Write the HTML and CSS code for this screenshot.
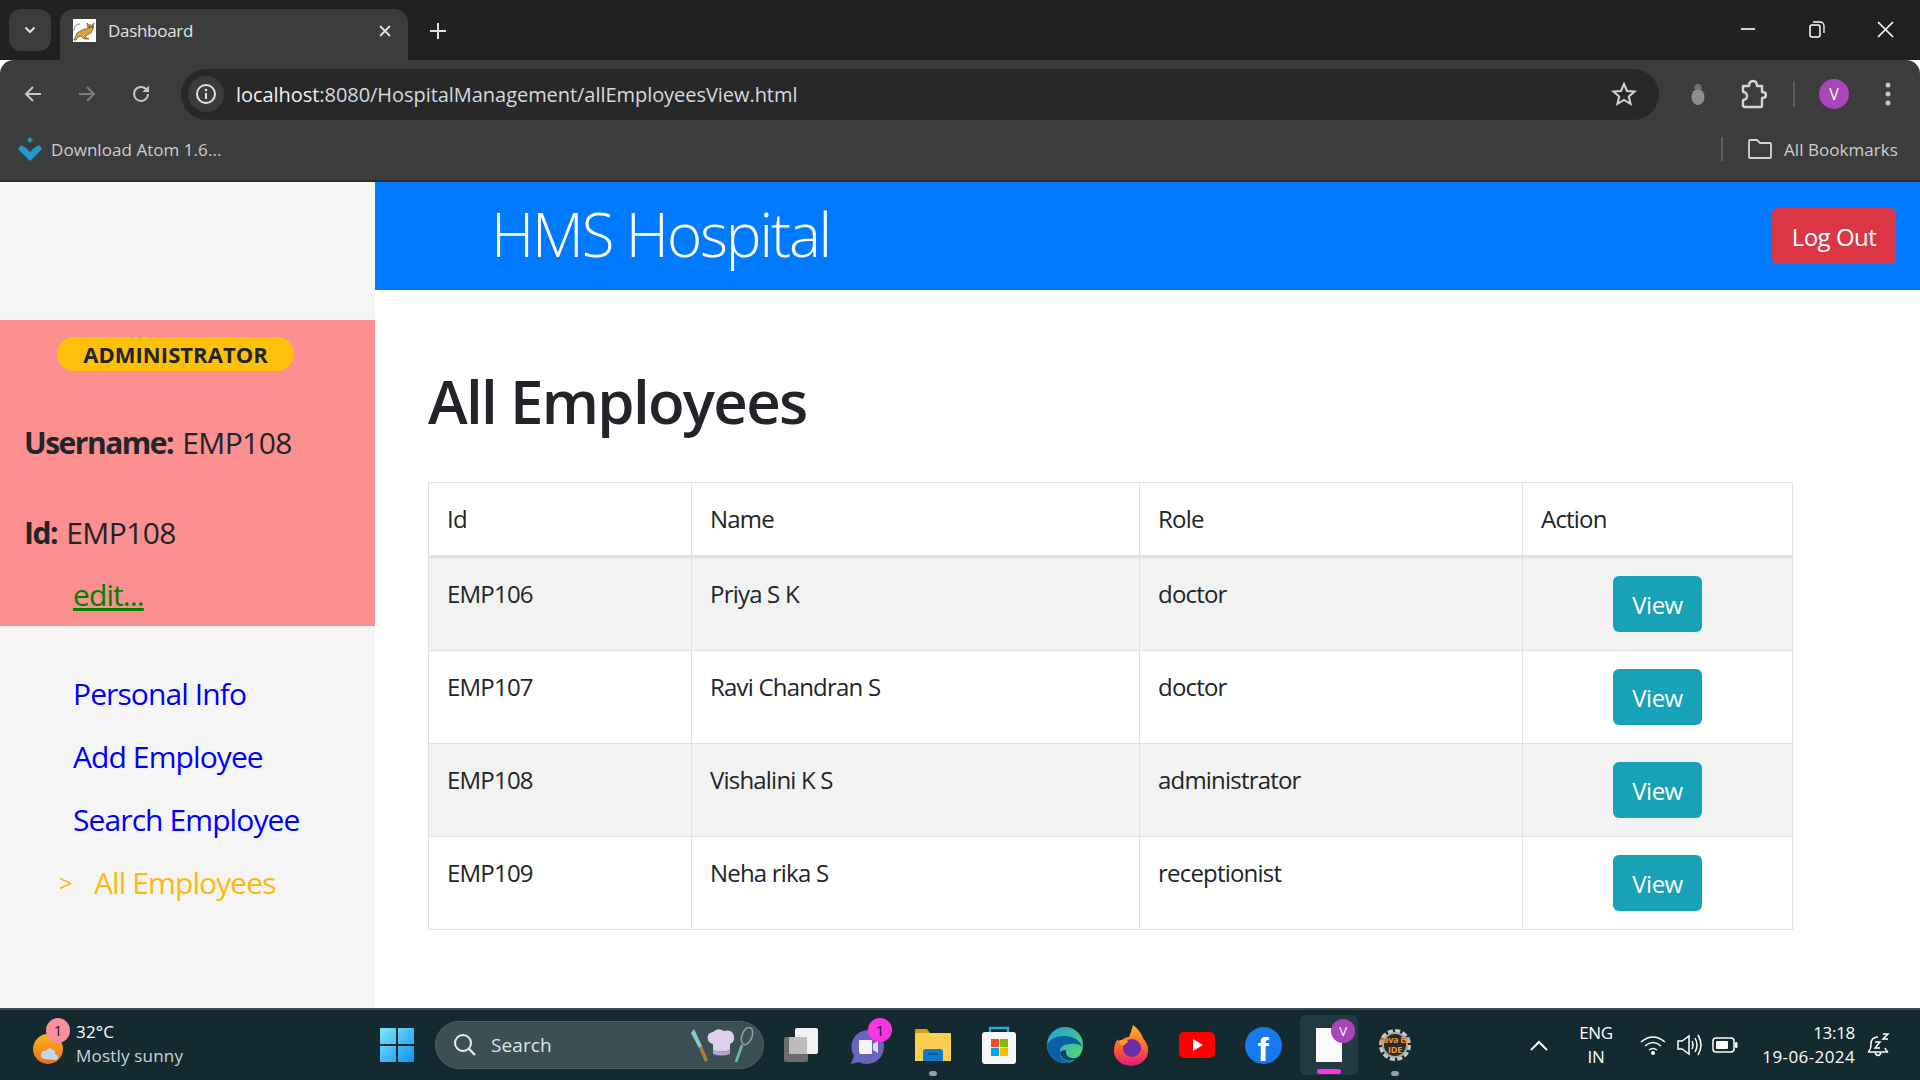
FILE: index.html
```html
<!DOCTYPE html>
<html lang="en">
<head>
  <meta charset="UTF-8" />
  <meta name="viewport" content="width=device-width, initial-scale=1.0" />
  <title>Dashboard</title>
  <link rel="stylesheet" href="styles.css">
</head>
<body>

  <!-- browser chrome -->
  <div class="tabstrip">
    <div class="tab-list">
      <svg width="14" height="14" viewBox="0 0 14 14"><path d="M2.500 4.500 7 9l4.500-4.500" fill="none" stroke="#e3e3e3" stroke-width="2"/></svg>
    </div>
    <div class="tab">
      <svg class="favicon" width="23" height="23" viewBox="0 0 23 23">
        <rect width="23" height="23" fill="#fff"/>
        <path d="M1 21 4 14l7-4 4 0-1-6 2 2h3l2-2-1 6-2 4-4 2-2 2 4 2h-5l-3-3-3 1-2 3z" fill="#d9a441" stroke="#6b4d1c" stroke-width=".7"/>
        <path d="M1 12q0-7 6-7" fill="none" stroke="#888" stroke-width="1"/>
        <circle cx="16.500" cy="8" r=".9" fill="#333"/><circle cx="19.500" cy="8" r=".9" fill="#333"/>
      </svg>
      <span class="tab-title">Dashboard</span>
      <svg class="tab-close" width="12" height="12" viewBox="0 0 12 12"><path d="M1 1l10 10M11 1 1 11" stroke="#e3e3e3" stroke-width="1.800"/></svg>
    </div>
    <svg class="new-tab" width="16" height="16" viewBox="0 0 16 16"><path d="M8 0v16M0 8h16" stroke="#e3e3e3" stroke-width="2"/></svg>
    <div class="window-btns">
      <svg width="16" height="16" viewBox="0 0 16 16"><path d="M1 8h14" stroke="#fff" stroke-width="1.600"/></svg>
      <svg width="16" height="18" viewBox="0 0 16 18"><rect x="1" y="5" width="10" height="12" rx="2" fill="none" stroke="#fff" stroke-width="1.500"/><path d="M4 2h7a4 4 0 0 1 4 4v7" fill="none" stroke="#fff" stroke-width="1.300"/></svg>
      <svg width="17" height="17" viewBox="0 0 17 17"><path d="M1 1l15 15M16 1 1 16" stroke="#fff" stroke-width="1.600"/></svg>
    </div>
  </div>

  <div class="toolbar">
    <svg class="nav-btn" width="22" height="22" viewBox="0 0 22 22"><path d="M19 11H4M11 4l-7 7 7 7" fill="none" stroke="#c7c7c7" stroke-width="2"/></svg>
    <svg class="nav-btn" width="22" height="22" viewBox="0 0 22 22"><path d="M3 11h15M11 4l7 7-7 7" fill="none" stroke="#7c7c7c" stroke-width="2"/></svg>
    <svg class="nav-btn" width="22" height="22" viewBox="0 0 22 22"><path d="M18 11a7 7 0 1 1-2-5l2 2" fill="none" stroke="#c7c7c7" stroke-width="2"/><path d="M19 2.500v6.500h-6.500z" fill="#c7c7c7"/></svg>
    <div class="omnibox">
      <span class="info-chip">
        <svg width="22" height="22" viewBox="0 0 22 22"><circle cx="11" cy="11" r="9" fill="none" stroke="#e3e3e3" stroke-width="2"/><path d="M11 10v6" stroke="#e3e3e3" stroke-width="2"/><circle cx="11" cy="7" r="1.300" fill="#e3e3e3"/></svg>
      </span>
      <span class="url"><span class="url-host">localhost</span>:8080/HospitalManagement/allEmployeesView.html</span>
      <svg class="star" width="26" height="26" viewBox="0 0 26 26"><path d="M13 3l3 7 7.500.6-5.700 5 1.800 7.400L13 19l-6.600 4 1.800-7.400-5.700-5L10 10z" fill="none" stroke="#d5d5d5" stroke-width="2"/></svg>
    </div>
    <div class="toolbar-right">
      <svg width="16" height="26" viewBox="0 0 16 26"><path d="M4 8q0-5 4-5t4 5z" fill="#707070"/><ellipse cx="8" cy="16" rx="6.500" ry="8" fill="#8e8e8e"/></svg>
      <svg class="puzzle" width="26" height="30" viewBox="0 0 26 30"><path d="M2 7h6q0-5 4-5t4 5h5v6q4 0 4 3t-4 3v8q0 1-1 1H3l-1-1v-6q4 0 4-4t-4-4z" fill="none" stroke="#d5d5d5" stroke-width="2.400" stroke-linejoin="round"/></svg>
      <span class="toolbar-sep"></span>
      <span class="avatar">V</span>
      <svg class="dots" width="6" height="26" viewBox="0 0 6 26"><circle cx="3" cy="4" r="2.500" fill="#c7c7c7"/><circle cx="3" cy="13" r="2.500" fill="#c7c7c7"/><circle cx="3" cy="22" r="2.500" fill="#c7c7c7"/></svg>
    </div>
  </div>

  <div class="bookmarks">
    <svg width="24" height="24" viewBox="0 0 24 24"><path d="M12 0l3 3-3 3-3-3z" fill="#1a9ccc"/><path d="M3 8l5 3 4 4 4-4 5-3 3 4-12 12L0 12z" fill="#1a9ccc"/></svg>
    <span class="bm-text">Download Atom 1.6...</span>
    <span class="bm-sep"></span>
    <svg class="bm-folder" width="24" height="20" viewBox="0 0 24 20"><path d="M1 2q0-1 1-1h7l3 3h10q1 0 1 1v13q0 1-1 1H2q-1 0-1-1z" fill="none" stroke="#d5d5d5" stroke-width="1.800"/></svg>
    <span class="bm-all">All Bookmarks</span>
  </div>

  <!-- the page itself -->
  <div class="page">
    <div class="sidebar">
      <div class="user-box">
        <span class="role-badge">ADMINISTRATOR</span>
        <p class="user-line"><b>Username:</b> EMP108</p>
        <p class="user-line"><b>Id:</b> EMP108</p>
        <a class="edit-link" href="#">edit...</a>
      </div>
      <ul class="side-nav">
        <li><a href="#">Personal Info</a></li>
        <li><a href="#">Add Employee</a></li>
        <li><a href="#">Search Employee</a></li>
        <li class="current"><span class="arrow">&gt;</span><a href="#">All Employees</a></li>
      </ul>
    </div>

    <div class="main">
      <div class="top-header">
        <span class="hospital-name">HMS Hospital</span>
        <button class="btn-logout">Log Out</button>
      </div>
      <div class="content">
        <h1>All Employees</h1>
        <table class="emp-table">
          <colgroup>
            <col class="col-id"><col class="col-name"><col class="col-role"><col class="col-action">
          </colgroup>
          <thead>
            <tr><th>Id</th><th>Name</th><th>Role</th><th>Action</th></tr>
          </thead>
          <tbody>
            <tr><td>EMP106</td><td>Priya S K</td><td>doctor</td><td class="action"><button class="btn-view">View</button></td></tr>
            <tr><td>EMP107</td><td>Ravi Chandran S</td><td>doctor</td><td class="action"><button class="btn-view">View</button></td></tr>
            <tr><td>EMP108</td><td>Vishalini K S</td><td>administrator</td><td class="action"><button class="btn-view">View</button></td></tr>
            <tr><td>EMP109</td><td>Neha rika S</td><td>receptionist</td><td class="action"><button class="btn-view">View</button></td></tr>
          </tbody>
        </table>
      </div>
    </div>
  </div>

  <!-- windows taskbar -->
  <div class="taskbar">
    <div class="tb-weather">
      <div class="weather-icon">
        <svg width="44" height="46" viewBox="0 0 44 46">
          <defs><linearGradient id="sun" x1="0" y1="0" x2="0" y2="1"><stop offset="0" stop-color="#f6b81d"/><stop offset="1" stop-color="#ee6a1a"/></linearGradient></defs>
          <circle cx="18" cy="27" r="15" fill="url(#sun)"/>
          <path d="M14 37q-4-1-3-5t5-3q2-4 6-2t3 5q4 1 3 4t-3 2z" fill="#bcd6ee"/>
        </svg>
        <span class="weather-badge">1</span>
      </div>
      <div class="weather-text">
        <span class="temp">32°C</span>
        <span class="sky">Mostly sunny</span>
      </div>
    </div>
    <div class="tb-start">
      <svg width="36" height="36" viewBox="0 0 36 36">
        <defs><linearGradient id="win" x1="0" y1="0" x2="1" y2="1"><stop offset="0" stop-color="#7ee6fb"/><stop offset="1" stop-color="#0d93f2"/></linearGradient></defs>
        <path d="M1 2q0-1 1-1h15v16H1zM19 1h15q1 0 1 1v15H19zM1 19h16v16H2q-1 0-1-1zM19 19h16v15q0 1-1 1H19z" fill="url(#win)"/>
      </svg>
    </div>
    <div class="tb-search">
      <svg width="24" height="24" viewBox="0 0 24 24"><circle cx="10" cy="10" r="8" fill="none" stroke="#e8eef0" stroke-width="2"/><path d="M16 16l6 6" stroke="#e8eef0" stroke-width="2.400"/></svg>
      <span class="search-label">Search</span>
      <svg class="search-deco" width="64" height="36" viewBox="0 0 64 36">
        <path d="M1 6l3-4 8 17-3 2z" fill="#8fc9d0"/><path d="M9 21l3-2 6 14-3 2z" fill="#b07d3e"/>
        <path d="M18 13q-2-7 5-8 5-5 11-1 8-2 10 5 1 6-4 8v6q-10 3-17 0v-6q-4-1-5-4z" fill="#dcd0ea"/>
        <path d="M23 23q10 3 17 0v4q-9 3-17 0z" fill="#b7a6cf"/>
        <ellipse cx="57" cy="9" rx="5" ry="9" fill="none" stroke="#8a9ea6" stroke-width="1.600" transform="rotate(20 57 9)"/>
        <path d="M52 18l-6 17" stroke="#6bbcae" stroke-width="2.600"/>
      </svg>
    </div>
    <div class="tb-apps">
      <div class="tb-app">
        <svg width="36" height="36" viewBox="0 0 36 36"><rect x="1" y="10" width="24" height="25" rx="2" fill="#6d6d6d"/><rect x="12" y="1" width="23" height="26" rx="2" fill="#f2f2f2"/><rect x="6" y="10" width="18" height="17" fill="#bdbdbd"/></svg>
      </div>
      <div class="tb-app">
        <svg width="36" height="42" viewBox="0 0 36 42"><path d="M18 6a17 17 0 1 1-8 32l-8 2 3-8A17 17 0 0 1 18 6z" fill="#6a64bd"/><path d="M10 16h13v14H12q-2 0-2-2z" fill="#f4f4f4"/><path d="M24 20l5-3v12l-5-3z" fill="#dcdcf2"/></svg>
        <span class="app-badge">1</span>
      </div>
      <div class="tb-app">
        <svg width="38" height="34" viewBox="0 0 38 34"><path d="M1 2q0-1 1-1h11l3 4h21v28H1z" fill="#d79c17"/><rect x="1" y="5" width="36" height="28" fill="#fbcf4f"/><path d="M9 24q0-3 3-3h14q3 0 3 3v9H9z" fill="#0f7bc9"/><path d="M14 26h10" stroke="#064b80" stroke-width="1.500"/></svg>
        <span class="app-dot"></span>
      </div>
      <div class="tb-app">
        <svg width="36" height="38" viewBox="0 0 36 38"><path d="M9 8V2h18v6" fill="none" stroke="#2ba8e0" stroke-width="2.400"/><rect x="1" y="6" width="34" height="32" rx="3" fill="#f5f5f5"/><rect x="10" y="13" width="8" height="8" fill="#f25022"/><rect x="19" y="13" width="8" height="8" fill="#7fba00"/><rect x="10" y="22" width="8" height="8" fill="#00a4ef"/><rect x="19" y="22" width="8" height="8" fill="#ffb900"/></svg>
      </div>
      <div class="tb-app">
        <svg width="36" height="38" viewBox="0 0 36 38">
          <defs><linearGradient id="edge" x1="0" y1="0" x2="1" y2="1"><stop offset="0" stop-color="#1a9fd6"/><stop offset="1" stop-color="#5fdc6a"/></linearGradient></defs>
          <circle cx="18" cy="19" r="18" fill="url(#edge)"/>
          <path d="M0 19a18 18 0 0 0 26 16q-12 2-13-8-1-8 9-9 9-1 14 3Q30 10 18 10 4 10 0 19z" fill="#0c5fa6"/>
          <path d="M13 27q2 10 15 7 5-2 7-6-5 5-10 4-7-1-6-8-6 0-6 3z" fill="#0a3f7a"/>
        </svg>
      </div>
      <div class="tb-app">
        <svg width="36" height="42" viewBox="0 0 36 42">
          <defs><linearGradient id="fox" x1="0" y1="0" x2="0" y2="1"><stop offset="0" stop-color="#ffb52a"/><stop offset=".6" stop-color="#ff5a2c"/><stop offset="1" stop-color="#e31587"/></linearGradient></defs>
          <path d="M20 1q8 6 10 13 6 7 5 13a17 15 0 0 1-34 0q0-8 4-12 0 4 2 5 2-7 9-7 2-5 4-12z" fill="url(#fox)"/>
          <circle cx="19" cy="24" r="9" fill="#6a2ca8"/>
          <path d="M5 17q6-3 11 1-4 1-4 3-6 1-7-4z" fill="#ff9a2a"/>
        </svg>
      </div>
      <div class="tb-app">
        <svg width="36" height="26" viewBox="0 0 36 26"><rect width="36" height="26" rx="5" fill="#f00"/><path d="M14 7l10 6-10 6z" fill="#fff"/></svg>
      </div>
      <div class="tb-app">
        <span class="fb-logo">f</span>
      </div>
      <div class="tb-app tb-active">
        <svg width="26" height="34" viewBox="0 0 26 34"><rect width="26" height="34" fill="#fafafa"/></svg>
        <span class="active-avatar">V</span>
        <span class="active-bar"></span>
      </div>
      <div class="tb-app">
        <svg width="36" height="36" viewBox="0 0 36 36">
          <circle cx="18" cy="18" r="14" fill="none" stroke="#c9c9c9" stroke-width="4" stroke-dasharray="5 2.300"/>
          <circle cx="18" cy="18" r="12" fill="#2a2a2a" stroke="#a8a8a8" stroke-width="2"/>
          <text x="18" y="16" class="gear-text">Java EE</text>
          <text x="18" y="26" class="gear-text">IDE</text>
        </svg>
        <span class="app-dot"></span>
      </div>
    </div>
    <div class="tb-tray">
      <div class="tray-slot"><svg width="18" height="11" viewBox="0 0 18 11"><path d="M1 10l8-8 8 8" fill="none" stroke="#fff" stroke-width="2"/></svg></div>
      <div class="tray-lang"><span>ENG</span><span>IN</span></div>
      <div class="tray-slot"><svg width="26" height="22" viewBox="0 0 26 22"><path d="M1 8q12-10 24 0M5 12q8-7 16 0M9 16q4-3 8 0" fill="none" stroke="#fff" stroke-width="1.500"/><circle cx="13" cy="19" r="2" fill="#fff"/></svg></div>
      <div class="tray-slot"><svg width="26" height="24" viewBox="0 0 26 24"><path d="M2 8h4l7-5v18l-7-5H2z" fill="none" stroke="#fff" stroke-width="1.500"/><path d="M16 8q2 4 0 8M19 5q4 7 0 14M22 2q6 10 0 20" fill="none" stroke="#fff" stroke-width="1.500"/></svg></div>
      <div class="tray-slot"><svg width="26" height="16" viewBox="0 0 26 16"><rect x="1" y="1" width="21" height="14" rx="3" fill="none" stroke="#fff" stroke-width="1.500"/><rect x="4" y="4" width="12" height="8" rx="1" fill="#fff"/><rect x="23" y="5" width="2.500" height="6" rx="1" fill="#fff"/></svg></div>
      <div class="tray-clock"><span>13:18</span><span class="clock-date">19-06-2024</span></div>
      <div class="tray-bell"><svg width="24" height="26" viewBox="0 0 24 26"><path d="M2 20q3-2 3-8 0-7 7-7M2 20h20q-2-1-3-4M9 21q3 5 6 0" fill="none" stroke="#fff" stroke-width="1.500"/><path d="M9 10h5l-5 6h5M17 2h5l-5 5h5" fill="none" stroke="#fff" stroke-width="1.500"/></svg></div>
    </div>
  </div>

</body>
</html>
```

FILE: styles.css
```css
* {
  box-sizing: border-box;
}
body {
  margin: 0;
  width: 1920px;
  height: 1080px;
  overflow: hidden;
  display: flex;
  flex-direction: column;
  font-family: 'Open Sans', 'Liberation Sans', sans-serif;
  color: #212529;
  background-color: #fff;
}

/* browser chrome */
.tabstrip {
  height: 60px;
  flex: none;
  display: flex;
  align-items: flex-end;
  background-color: #202221;
  position: relative;
}
.tab-list {
  width: 42px;
  height: 42px;
  margin: 0 0 9px 9px;
  border-radius: 12px;
  background-color: #3c3c3c;
  display: flex;
  align-items: center;
  justify-content: center;
}
.tab {
  width: 348px;
  height: 51px;
  margin-left: 9px;
  padding: 0 17px 8px 13px;
  border-radius: 14px 14px 0 0;
  background-color: #3c3c3c;
  display: flex;
  align-items: center;
}
.tab-title {
  margin-left: 12px;
  flex: 1;
  font-size: 17px;
  letter-spacing: -0.3px;
  color: #e3e3e3;
}
.new-tab {
  margin: 0 0 21px 22px;
}
.window-btns {
  margin: 0 26px 22px auto;
  width: 154px;
  display: flex;
  align-items: center;
  justify-content: space-between;
}
.toolbar {
  height: 68px;
  flex: none;
  display: flex;
  align-items: center;
  padding: 0 0 0 22px;
  background-color: #3c3c3c;
  border-radius: 14px 14px 0 0;
}
.nav-btn {
  margin-right: 32px;
}
.omnibox {
  width: 1478px;
  height: 51px;
  margin: 0 0 0 -3px;
  padding: 0 22px 0 7px;
  border-radius: 26px;
  background-color: #282828;
  display: flex;
  align-items: center;
}
.info-chip {
  width: 36px;
  height: 36px;
  border-radius: 50%;
  background-color: #3c3c3c;
  display: flex;
  align-items: center;
  justify-content: center;
}
.url {
  margin-left: 12px;
  flex: 1;
  font-size: 20px;
  letter-spacing: -0.05px;
  color: #d3dbe0;
}
.url-host {
  color: #f1f1f1;
}
.toolbar-right {
  flex: 1;
  display: flex;
  align-items: center;
}
.toolbar-right > svg:first-child {
  margin-left: 31px;
}
.puzzle {
  margin-left: 35px;
}
.toolbar-sep {
  width: 2px;
  height: 26px;
  margin-left: 26px;
  background-color: #5a5a5a;
}
.avatar {
  width: 30px;
  height: 30px;
  margin-left: 24px;
  border-radius: 50%;
  background-color: #a846b9;
  color: #fff;
  font-size: 16px;
  display: flex;
  align-items: center;
  justify-content: center;
}
.dots {
  margin-left: 36px;
}
.bookmarks {
  height: 54px;
  flex: none;
  display: flex;
  align-items: center;
  padding: 0 22px 10px 18px;
  background-color: #3c3c3c;
  border-bottom: 2px solid #2d2d2d;
  font-size: 17px;
  letter-spacing: 0.05px;
  color: #cfcfcf;
}
.bm-text {
  margin-left: 9px;
}
.bm-sep {
  width: 2px;
  height: 24px;
  margin-left: auto;
  background-color: #5f5f5f;
}
.bm-folder {
  margin-left: 25px;
}
.bm-all {
  margin-left: 12px;
}

/* page */
.page {
  flex: 1;
  min-height: 0;
  display: flex;
}
.sidebar {
  width: 375px;
  flex: none;
  padding-top: 138px;
  background-color: #f5f5f5;
  font-size: 30px;
}
.user-box {
  height: 306px;
  padding: 17px 0 0 24px;
  background-color: #fc9090;
}
.role-badge {
  display: block;
  width: 237px;
  height: 34px;
  margin-left: 33px;
  border-radius: 17px;
  background-color: #ffc107;
  font-size: 22px;
  font-weight: 700;
  line-height: 34px;
  text-align: center;
  letter-spacing: 0.05px;
}
.user-line {
  margin: 45px 0 0;
  line-height: 45px;
  letter-spacing: -0.6px;
}
.user-line:first-of-type {
  margin-top: 49px;
}
.user-line b {
  margin-right: 2px;
  font-weight: 700;
  letter-spacing: -1.5px;
}
.edit-link {
  display: block;
  width: max-content;
  margin: 17px 0 0 49px;
  line-height: 45px;
  letter-spacing: -0.9px;
  color: #008000;
  text-decoration: underline;
}
.side-nav {
  list-style: none;
  margin: 0;
  padding: 45px 0 0 73px;
}
.side-nav li {
  line-height: 45px;
  margin-bottom: 18px;
  letter-spacing: -0.9px;
  position: relative;
}
.side-nav a {
  color: #00f;
  text-decoration: none;
}
.side-nav .current a {
  margin-left: 21px;
  color: #ffb90f;
}
.arrow {
  position: absolute;
  left: -14px;
  font-size: 24px;
  color: #ffb90f;
}

.main {
  flex: 1;
  min-width: 0;
}
.top-header {
  height: 108px;
  padding: 0 24px 0 116px;
  background-color: #007bff;
  display: flex;
  align-items: center;
  justify-content: space-between;
}
.hospital-name {
  padding-bottom: 5px;
  font-size: 60px;
  font-weight: 300;
  letter-spacing: -2.1px;
  color: #fff;
}
.btn-logout {
  width: 124px;
  height: 56px;
  border: none;
  border-radius: 6px;
  background-color: #dc3545;
  color: #fff;
  font-family: inherit;
  font-size: 24px;
  letter-spacing: -0.5px;
}
.content {
  padding: 75px 0 0 53px;
}
h1 {
  margin: 0 0 45px;
  font-size: 60px;
  font-weight: 600;
  line-height: 72px;
  letter-spacing: -1.7px;
}
.emp-table {
  width: 1364px;
  table-layout: fixed;
  border-collapse: collapse;
  font-size: 24px;
  letter-spacing: -0.8px;
}
.col-id { width: 263px; }
.col-name { width: 448px; }
.col-role { width: 383px; }
.col-action { width: 270px; }
.emp-table th, .emp-table td {
  padding: 18px;
  border: 1px solid #dee2e6;
  text-align: left;
  vertical-align: top;
  font-weight: 400;
  line-height: 36px;
}
.emp-table th {
  border-bottom: 3px solid #dee2e6;
}
.emp-table tbody tr:nth-child(odd) {
  background-color: #f2f2f2;
}
.emp-table td.action {
  text-align: center;
}
.btn-view {
  display: inline-block;
  vertical-align: top;
  width: 89px;
  height: 56px;
  border: none;
  border-radius: 6px;
  background-color: #17a2b8;
  color: #fff;
  font-family: inherit;
  font-size: 24px;
  letter-spacing: -0.5px;
}

/* taskbar */
.taskbar {
  height: 72px;
  flex: none;
  display: flex;
  align-items: center;
  background-color: #132a31;
  border-top: 2px solid #3b4a4e;
  color: #fff;
  font-size: 17px;
  letter-spacing: -0.3px;
}
.tb-weather {
  width: 364px;
  padding-left: 30px;
  display: flex;
  align-items: center;
}
.weather-icon {
  width: 46px;
  height: 46px;
  position: relative;
}
.weather-badge {
  position: absolute;
  left: 16px;
  top: -4px;
  width: 24px;
  height: 25px;
  border-radius: 50%;
  background-color: #ff8f9e;
  color: #1a1a1a;
  font-size: 15px;
  line-height: 25px;
  text-align: center;
}
.weather-text {
  display: flex;
  flex-direction: column;
  margin-top: -3px;
  line-height: 24px;
  letter-spacing: 0.2px;
}
.sky {
  color: #ced4d6;
}
.tb-start {
  width: 66px;
  display: flex;
  justify-content: center;
}
.tb-search {
  width: 329px;
  height: 48px;
  margin-left: 5px;
  padding: 0 9px 0 17px;
  border-radius: 24px;
  background-color: #3b4f55;
  border: 1px solid #4c5f64;
  display: flex;
  align-items: center;
}
.search-label {
  margin-left: 14px;
  font-size: 19px;
  letter-spacing: 0.1px;
  color: #dfe5e7;
}
.search-deco {
  margin-left: auto;
}
.tb-apps {
  margin-left: 4px;
  display: flex;
}
.tb-app {
  width: 66px;
  height: 60px;
  display: flex;
  align-items: center;
  justify-content: center;
  position: relative;
}
.app-badge {
  position: absolute;
  left: 34px;
  top: 3px;
  width: 24px;
  height: 24px;
  border-radius: 50%;
  background-color: #fb34e4;
  color: #1a1a1a;
  font-size: 15px;
  line-height: 24px;
  text-align: center;
}
.app-dot {
  position: absolute;
  left: 29px;
  bottom: -1px;
  width: 8px;
  height: 5px;
  border-radius: 3px;
  background-color: #93a0a4;
}
.fb-logo {
  width: 37px;
  height: 37px;
  padding-top: 7px;
  border-radius: 50%;
  background-color: #1778f2;
  color: #fff;
  font-family: 'Liberation Sans', sans-serif;
  font-size: 34px;
  font-weight: 700;
  line-height: 30px;
  text-align: center;
}
.tb-active {
  width: 58px;
  margin: 0 4px;
  border-radius: 6px;
  background-color: #223a41;
}
.active-avatar {
  position: absolute;
  left: 31px;
  top: 4px;
  width: 24px;
  height: 24px;
  border-radius: 50%;
  background-color: #a846b9;
  font-size: 13px;
  line-height: 24px;
  text-align: center;
}
.active-bar {
  position: absolute;
  left: 17px;
  bottom: 1px;
  width: 24px;
  height: 5px;
  border-radius: 3px;
  background-color: #fb34e4;
}
.gear-text {
  fill: #f29a2e;
  font-size: 9px;
  font-weight: 700;
  letter-spacing: -0.3px;
  text-anchor: middle;
}
.tb-tray {
  margin-left: auto;
  padding-right: 19px;
  display: flex;
  align-items: center;
}
.tray-slot {
  width: 36px;
  display: flex;
  justify-content: center;
}
.tray-lang {
  width: 78px;
  display: flex;
  flex-direction: column;
  align-items: center;
  line-height: 24px;
}
.tray-clock {
  width: 112px;
  margin-top: -1px;
  display: flex;
  flex-direction: column;
  align-items: flex-end;
  line-height: 24px;
}
.clock-date {
  letter-spacing: 0.4px;
}
.tray-bell {
  width: 46px;
  display: flex;
  justify-content: center;
}
```
